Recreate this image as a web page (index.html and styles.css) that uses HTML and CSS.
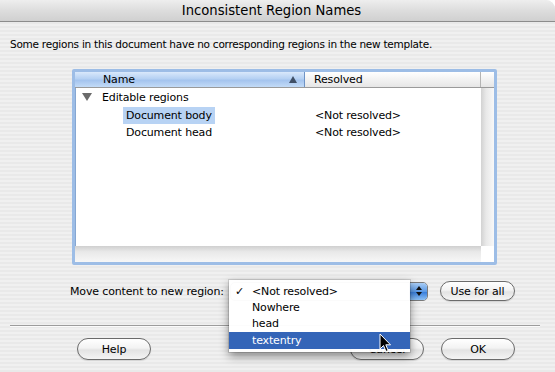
FILE: index.html
```html
<!DOCTYPE html>
<html>
<head>
<meta charset="utf-8">
<link rel="stylesheet" href="styles.css">
</head>
<body>
<div class="window">
  <div class="titlebar">Inconsistent Region Names</div>
  <div class="content">
    <div class="intro">Some regions in this document have no corresponding regions in the new template.</div>
    <div class="table-wrap">
      <div class="thead">
        <div class="th th-name">Name<span class="sort-arrow"></span></div>
        <div class="th th-res">Resolved</div>
        <div class="th th-end"></div>
      </div>
      <div class="table-main">
        <div class="rows">
          <div class="row">
            <div class="cell cell-name"><span class="disclosure"></span><span class="group-label">Editable regions</span></div>
            <div class="cell cell-res"></div>
          </div>
          <div class="row">
            <div class="cell cell-name indent"><span class="label selected">Document body</span></div>
            <div class="cell cell-res">&lt;Not resolved&gt;</div>
          </div>
          <div class="row">
            <div class="cell cell-name indent"><span class="label">Document head</span></div>
            <div class="cell cell-res">&lt;Not resolved&gt;</div>
          </div>
        </div>
        <div class="vscroll"></div>
      </div>
      <div class="hscroll-row">
        <div class="hscroll"></div>
        <div class="corner"></div>
      </div>
    </div>
    <div class="move-row">
      <span class="move-label">Move content to new region:</span>
      <div class="popup">
        <span class="popup-text">&lt;Not resolved&gt;</span>
        <span class="popup-arrows">
          <svg width="8" height="12" viewBox="0 0 8 12"><path d="M4 1 L7 5 H1 Z M4 11 L7 7 H1 Z" fill="#111"/></svg>
        </span>
      </div>
      <button class="aqua-btn btn-use">Use for all</button>
    </div>
    <div class="separator"></div>
    <div class="btn-row">
      <button class="aqua-btn btn-help">Help</button>
      <div class="btn-right">
        <button class="aqua-btn">Cancel</button>
        <button class="aqua-btn">OK</button>
      </div>
    </div>
  </div>
  <div class="menu">
    <div class="menu-item"><span class="check">✓</span>&lt;Not resolved&gt;</div>
    <div class="menu-item">Nowhere</div>
    <div class="menu-item">head</div>
    <div class="menu-item active">textentry</div>
  </div>
  <svg class="cursor" width="13" height="20" viewBox="0 0 13 20">
    <path d="M1 1 L1 16 L4.5 12.5 L7 18.5 L9.2 17.5 L6.8 11.8 L11.5 11.8 Z" fill="#000" stroke="#fff" stroke-width="1"/>
  </svg>
</div>
</body>
</html>
```

FILE: styles.css
```css
* { box-sizing: border-box; }
html, body { margin: 0; padding: 0; background: #fff; }
body { font-family: "DejaVu Sans", sans-serif; font-size: 11px; letter-spacing: -0.15px; color: #000; }

.window {
  position: relative;
  width: 555px;
  height: 372px;
  overflow: hidden;
  border-top-right-radius: 9px;
  background: repeating-linear-gradient(to bottom, #f0f0f0 0, #f0f0f0 2px, #e9e9e9 2px, #e9e9e9 4px);
}

.titlebar {
  height: 22px;
  line-height: 21px;
  text-align: center;
  padding-right: 12px;
  font-size: 13.2px;
  letter-spacing: 0;
  background: linear-gradient(to bottom, #eeeeee 0%, #dddddd 50%, #d0d0d0 100%);
  border-bottom: 1px solid #8c8c8c;
}

.content { padding: 14px 10px 0 10px; }

.intro { height: 16px; line-height: 16px; font-size: 10.5px; letter-spacing: -0.25px; }

.table-wrap {
  margin: 17px 0 0 62px;
  width: 425px;
  height: 196px;
  border: 3px solid #9dbde6;
  border-radius: 2px;
  background: #fff;
  display: flex;
  flex-direction: column;
  box-shadow: inset 0 0 0 1px #86a7d2;
}

.thead {
  height: 16px;
  display: flex;
  border-bottom: 1px solid #9a9a9a;
  flex: none;
}
.th {
  height: 15px;
  line-height: 15px;
  background: linear-gradient(to bottom, #ffffff 0%, #f2f2f2 50%, #e6e6e6 100%);
  border-right: 1px solid #b4b4b4;
}
.th-name {
  width: 230px;
  padding-left: 28px;
  position: relative;
  background: linear-gradient(to bottom, #d9e8fb 0%, #b5d1f3 45%, #a4c4ee 55%, #c3dbf7 100%);
  border-right: 1px solid #6e93c6;
}
.sort-arrow {
  position: absolute;
  right: 7px;
  top: 4px;
  width: 0; height: 0;
  border-left: 4px solid transparent;
  border-right: 4px solid transparent;
  border-bottom: 7px solid #3f4f66;
}
.th-res { width: 176px; padding-left: 9px; }
.th-end { flex: 1; border-right: none; }

.table-main { flex: 1; display: flex; min-height: 0; }
.rows { flex: 1; padding-top: 1px; }
.vscroll {
  width: 13px;
  background: linear-gradient(to right, #d2d2d2 0%, #e9e9e9 40%, #f8f8f8 100%);
}
.hscroll-row { height: 16px; display: flex; flex: none; }
.hscroll {
  flex: 1;
  background: linear-gradient(to bottom, #cfcfcf 0%, #e8e8e8 35%, #f7f7f7 100%);
}
.corner { width: 13px; background: #fff; }

.row { height: 17.5px; display: flex; align-items: center; }
.cell { height: 17.5px; display: flex; align-items: center; }
.cell-name { width: 230px; padding-left: 7px; }
.cell-name.indent { padding-left: 48px; }
.cell-res { padding-left: 10px; }
.disclosure {
  width: 0; height: 0;
  border-left: 5px solid transparent;
  border-right: 5px solid transparent;
  border-top: 8px solid #6b6b6b;
  margin-right: 10px;
  margin-top: -2px;
}
.label { padding: 1px 3px; line-height: 15px; }
.label.selected { background: #b8d3f4; }

.move-row {
  margin-top: 16px;
  height: 20px;
  display: flex;
  align-items: center;
  padding-left: 60px;
}
.move-label { width: 160px; }
.popup {
  width: 198px;
  height: 19px;
  border: 1px solid #7a7a7a;
  border-radius: 5px;
  background: linear-gradient(#fff, #e8e8e8);
  display: flex;
  align-items: center;
  padding-left: 20px;
  position: relative;
}
.popup-text { flex: 1; }
.popup-arrows {
  width: 18px;
  height: 17px;
  border-radius: 0 4px 4px 0;
  background: linear-gradient(to bottom, #a9cdf5 0%, #5c9ae6 50%, #3a7fdc 55%, #8cc0f5 100%);
  display: flex;
  align-items: center;
  justify-content: center;
  border-left: 1px solid #3f6ba8;
}

.aqua-btn {
  font-family: "DejaVu Sans", sans-serif;
  font-size: 11px;
  letter-spacing: -0.15px;
  height: 20px;
  width: 74px;
  padding: 0;
  border: 1px solid #6b6b6b;
  border-radius: 10px;
  background: linear-gradient(to bottom, #ffffff 0%, #f3f3f3 45%, #e3e3e3 55%, #f4f4f4 100%);
  color: #000;
  box-shadow: 0 1px 1px rgba(0,0,0,0.12);
}
.btn-use { margin-left: 12px; width: 75px; }

.separator {
  margin: 24px 5px 0 0;
  height: 2px;
  border-top: 1px solid #9c9c9c;
  border-bottom: 1px solid #fbfbfb;
}

.btn-row {
  margin-top: 11px;
  display: flex;
  padding-left: 67px;
}
.btn-row .aqua-btn { height: 22px; border-radius: 11px; }
.btn-right { margin-left: auto; margin-right: 30px; display: flex; gap: 17px; }

.menu {
  position: absolute;
  left: 229px;
  top: 280px;
  width: 181px;
  padding: 4px 0 3px;
  background: rgba(255,255,255,0.97);
  box-shadow: 0 4px 9px rgba(0,0,0,0.45), 0 0 0 1px rgba(0,0,0,0.12);
}
.menu-item {
  height: 16px;
  line-height: 16px;
  padding-left: 23px;
  position: relative;
}
.menu-item .check { position: absolute; left: 6px; }
.menu-item.active { background: #3465b8; color: #fff; height: 17px; line-height: 17px; }

.cursor { position: absolute; left: 379px; top: 333px; }
```
